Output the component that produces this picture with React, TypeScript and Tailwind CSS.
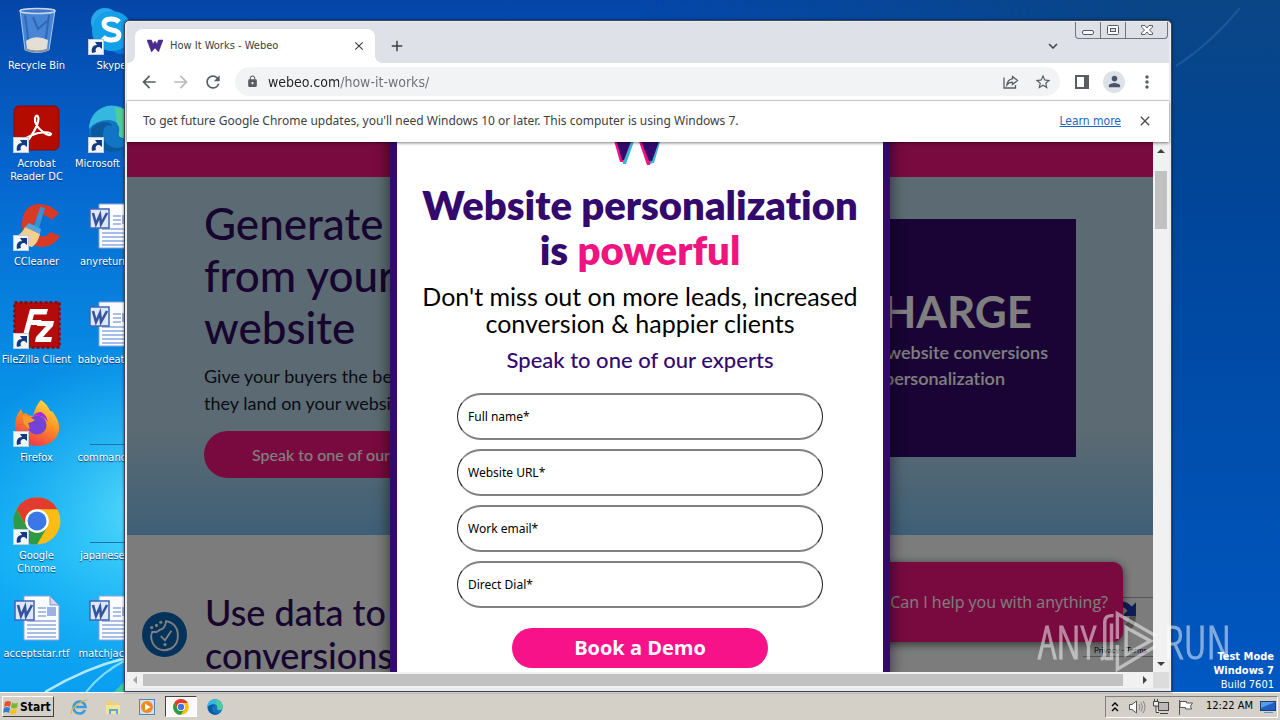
import { ReactNode } from "react";
import {
  MdArrowBack,
  MdArrowForward,
  MdRefresh,
  MdLock,
  MdClose,
  MdAdd,
  MdKeyboardArrowDown,
  MdMoreVert,
  MdPerson,
  MdStarBorder,
} from "react-icons/md";

const ui = "font-['DejaVu_Sans_Condensed','DejaVu_Sans',sans-serif]";

function ShortcutArrow() {
  return (
    <svg viewBox="0 0 16 16" className="absolute bottom-0 left-0 size-4" aria-hidden="true">
      <rect x="0.5" y="0.5" width="15" height="15" fill="#f4f6f8" stroke="#c3ccd6" />
      <path d="M4 14C3 9 5 6 9 6L7 3h7v7l-2.500-2C8 8 7 10 8 13z" fill="#123a80" />
    </svg>
  );
}

function RecycleBin() {
  return (
    <svg viewBox="0 0 48 48" className="size-12">
      <path d="M7 3L12 43q12 5 24 0L42 3z" fill="#5c9ae0" fillOpacity="0.75" stroke="#a9c8ea" />
      <path d="M12 8l4 30M36 8l-4 30M20 10l5 12 9-8" stroke="#2e66b8" strokeWidth="2" fill="none" />
      <path d="M13 34q10-7 22-1l-1 9q-10 4-20 0z" fill="#e3ded6" />
      <path d="M12 41q12 5 24 0v2q-12 5-24 0z" fill="#8b8f96" />
      <ellipse cx="24.500" cy="4" rx="17.500" ry="2.500" fill="#3d79c8" stroke="#c5d6e8" strokeWidth="1.500" />
    </svg>
  );
}

function Skype() {
  return (
    <svg viewBox="0 0 48 48" className="size-12">
      <circle cx="17" cy="15" r="14" fill="#28a8ea" />
      <circle cx="33" cy="34" r="13" fill="#0078d4" />
      <circle cx="24" cy="24" r="20" fill="#14a0e8" />
      <path d="M31 15q-3-3-8-3-7 0-7 5 0 4 8 6 7 1 7 5 0 5-8 5-5 0-8-3" stroke="#fff" strokeWidth="5" fill="none" />
    </svg>
  );
}

function Acrobat() {
  return (
    <svg viewBox="0 0 48 48" className="size-12">
      <rect x="1" y="1" width="45" height="44" rx="5" fill="#b30b00" stroke="#8a0800" />
      <path
        d="M12 36Q10 33 25 28Q37 26 38 29Q37 32 30 27Q21 20 22 13Q24 8 25.500 13Q26 20 16 34Q13 37 12 36z"
        stroke="#fff"
        strokeWidth="2.200"
        fill="none"
      />
    </svg>
  );
}

function Edge({ className }: { className: string }) {
  return (
    <svg viewBox="0 0 48 48" className={className}>
      <circle cx="24" cy="24" r="23" fill="#1275c4" />
      <path d="M1 24A23 23 0 0 1 47 23q0 9-9 10-9 0-7-5 2-12-10-13Q8 15 1 24z" fill="#35b8e0" />
      <path d="M27 2q20 4 20 21 0 9-9 10-9 0-7-5 2-5-2-9z" fill="#52d08a" fillOpacity="0.85" />
      <path d="M17 22q-6 12 5 19 9 5 20-3-8 10-20 9Q2 43 3 25q4-8 14-8 6 0 7 4-5-2-7 1z" fill="#0c5a9e" />
    </svg>
  );
}

function CCleaner() {
  return (
    <svg viewBox="0 0 48 48" className="size-12">
      <path d="M46 11Q38 0 24 1 8 4 9 24q3 17 18 20 13 1 20-11l-10-4q-4 6-9 4-8-3-7-12 2-9 9-9 6 1 8 5z" fill="#d83a26" />
      <path d="M27 4l5 1-6 20-5-2z" fill="#3c8fd0" />
      <path d="M16 20l12 6-1 5-15-7z" fill="#4fa5de" />
      <path d="M12 24l15 7q-2 9-8 13Q8 42 2 34q7-3 10-10z" fill="#f2cf8e" />
    </svg>
  );
}

function FileZilla() {
  return (
    <svg viewBox="0 0 48 48" className="size-12">
      <rect x="1.500" y="1.500" width="45" height="45" fill="#b50a0a" stroke="#8e0505" strokeWidth="2.500" strokeDasharray="3 2" />
      <path d="M9 38L17 8h18l-1.500 5.500H21L19.500 19h9l-1.500 5h-9l-4 14z" fill="#fff" />
      <path d="M25 20h16l-1 5-10 11h9l-1 5H22l1-5 10-11h-9z" fill="#fff" />
    </svg>
  );
}

function Firefox() {
  return (
    <svg viewBox="0 0 48 48" className="size-12">
      <defs>
        <linearGradient id="fox" x1="0.800" y1="0" x2="0.300" y2="1">
          <stop offset="0" stopColor="#ffe24a" />
          <stop offset="0.450" stopColor="#ff9422" />
          <stop offset="1" stopColor="#f0304f" />
        </linearGradient>
      </defs>
      <path d="M28 1q7 5 9 11 3 0 4 3 6 8 5 16-3 15-21 16Q4 46 2 27q0-10 6-17l2 5 3-1q2 3 7 3 3-11 8-16z" fill="url(#fox)" />
      <circle cx="24" cy="26" r="9.500" fill="#7542d8" />
      <path d="M10 17q8 1 12 4-3 3-7 3l2 6Q9 27 10 17z" fill="#ff9a28" />
      <path d="M20 17q9-2 15 6-2-8-7-10-5 0-8 4z" fill="#a02be0" />
    </svg>
  );
}

function Chrome({ className }: { className: string }) {
  return (
    <svg viewBox="0 0 48 48" className={className}>
      <circle cx="24" cy="24" r="23.500" fill="#fbbc16" />
      <path d="M3.600 12.200A23.500 23.500 0 0 1 44.400 12.200H24A11.800 11.800 0 0 0 13.800 29.900z" fill="#e33b2e" />
      <path d="M3.600 12.200A23.500 23.500 0 0 0 24 47.500L34.200 29.900A11.800 11.800 0 0 1 13.800 29.900z" fill="#2c9a47" />
      <circle cx="24" cy="24" r="11.800" fill="#fff" />
      <circle cx="24" cy="24" r="9.500" fill="#3b78e7" />
    </svg>
  );
}

function WordDoc() {
  return (
    <svg viewBox="0 0 48 48" className="size-12">
      <path d="M11 1h26l9 9v35H11z" fill="#fbfcff" stroke="#8ea3d4" />
      <path d="M37 1v9h9z" fill="#c9d7f2" stroke="#7e93c8" />
      <path d="M25 13h8M25 17h8M25 21h8M14 26h29M14 30h29M14 34h29M14 38h29M14 42h29" stroke="#90a8dc" strokeWidth="1.300" />
      <rect x="34" y="12" width="9" height="9" fill="#9cb2e2" />
      <rect x="2" y="6" width="19" height="19" fill="#dfe8fa" stroke="#4164b4" strokeWidth="1.500" />
      <path d="M5 10l3 11 4-9 1 9 6-11" stroke="#34549e" strokeWidth="2.600" fill="none" />
    </svg>
  );
}

function BlankFile() {
  return (
    <svg viewBox="0 0 48 48" className="size-12">
      <path d="M2 45.500h45" stroke="#1775a8" strokeWidth="1" />
    </svg>
  );
}

type DesktopItem = { label: string; icon: ReactNode; link?: boolean };

const desktopItems: DesktopItem[] = [
  { label: "Recycle Bin", icon: <RecycleBin /> },
  { label: "Skype", icon: <Skype />, link: true },
  { label: "Acrobat Reader DC", icon: <Acrobat />, link: true },
  { label: "Microsoft Edge", icon: <Edge className="size-12" />, link: true },
  { label: "CCleaner", icon: <CCleaner />, link: true },
  { label: "anyreturn.rtf", icon: <WordDoc /> },
  { label: "FileZilla Client", icon: <FileZilla />, link: true },
  { label: "babydeath.rtf", icon: <WordDoc /> },
  { label: "Firefox", icon: <Firefox />, link: true },
  { label: "command.jpg", icon: <BlankFile /> },
  { label: "Google Chrome", icon: <Chrome className="size-12" />, link: true },
  { label: "japanese.jpg", icon: <BlankFile /> },
  { label: "acceptstar.rtf", icon: <WordDoc /> },
  { label: "matchjack.rtf", icon: <WordDoc /> },
];

const wrapped = ["Acrobat Reader DC", "Google Chrome"];

function DesktopIcons() {
  return (
    <ul className="grid w-[150px] auto-rows-[98px] grid-cols-2 pt-[7px]">
      {desktopItems.map((item) => (
        <li key={item.label} className="flex flex-col items-center pr-[2px]">
          <div className="relative shrink-0">
            {item.icon}
            {item.link && <ShortcutArrow />}
          </div>
          <span
            className={
              (wrapped.includes(item.label) ? "w-16 " : "whitespace-nowrap ") +
              "mt-1 text-center text-[11px] leading-[13px] text-white [text-shadow:0_1px_1px_#00356e]"
            }
          >
            {item.label}
          </span>
        </li>
      ))}
    </ul>
  );
}

function Wallpaper() {
  return (
    <svg className="absolute inset-0 size-full" viewBox="0 0 1280 692" preserveAspectRatio="none" aria-hidden="true">
      <defs>
        <linearGradient id="sky" x1="0" y1="0" x2="0" y2="1">
          <stop offset="0" stopColor="#0446a8" />
          <stop offset="0.250" stopColor="#0566cf" />
          <stop offset="0.550" stopColor="#078fe6" />
          <stop offset="0.800" stopColor="#12aef4" />
          <stop offset="1" stopColor="#0b9ff0" />
        </linearGradient>
        <linearGradient id="deep" x1="0" y1="0" x2="0" y2="1">
          <stop offset="0" stopColor="#0a4585" />
          <stop offset="0.300" stopColor="#00459a" />
          <stop offset="1" stopColor="#0058c2" />
        </linearGradient>
        <linearGradient id="fade" x1="0" y1="0" x2="1" y2="0">
          <stop offset="0.500" stopColor="#000" />
          <stop offset="0.900" stopColor="#fff" />
        </linearGradient>
        <mask id="east">
          <rect width="1280" height="692" fill="url(#fade)" />
        </mask>
        <radialGradient id="glow" cx="140" cy="510" r="170" gradientUnits="userSpaceOnUse">
          <stop offset="0" stopColor="#6ff0ff" stopOpacity="0.700" />
          <stop offset="1" stopColor="#30c8ff" stopOpacity="0" />
        </radialGradient>
      </defs>
      <rect width="1280" height="692" fill="url(#sky)" />
      <rect width="400" height="692" fill="url(#glow)" />
      <rect width="1280" height="692" fill="url(#deep)" mask="url(#east)" />
      <path d="M1176 66Q1210 44 1240 8" stroke="#5b8fc8" strokeOpacity="0.250" strokeWidth="2" fill="none" />
      <path d="M45 692Q85 668 126 658" stroke="#d8fbff" strokeOpacity="0.800" strokeWidth="2.500" fill="none" />
      <path d="M86 692Q102 672 126 660" stroke="#b4f3ff" strokeOpacity="0.700" strokeWidth="2" fill="none" />
      <path d="M114 692l12-12v12z" fill="#3fc9a0" />
    </svg>
  );
}

function WindowButtons() {
  return (
    <div className="mr-px flex h-[17px] rounded-b-[4px] border border-t-0 border-[#71757d] bg-[#dde0e7]">
      <button aria-label="Minimize" className="flex w-[25px] items-center justify-center border-r border-[#71757d]">
        <svg viewBox="0 0 24 16" className="h-4 w-6">
          <rect x="6.500" y="8.500" width="11" height="4" rx="1.500" fill="#fff" stroke="#555a62" />
        </svg>
      </button>
      <button aria-label="Restore" className="flex w-[25px] items-center justify-center border-r border-[#71757d]">
        <svg viewBox="0 0 24 16" className="h-4 w-6">
          <rect x="6.500" y="3.500" width="11" height="9" rx="1" fill="#fff" stroke="#555a62" />
          <rect x="9.500" y="6.500" width="5" height="3" fill="#dde0e7" stroke="#555a62" />
        </svg>
      </button>
      <button aria-label="Close" className="flex w-[41px] items-center justify-center">
        <svg viewBox="0 0 24 16" className="h-4 w-6">
          <path
            d="M6.500 3.500h3.500l2 2.500 2-2.500h3.500v1.500l-3 3 3 3v1.500H14l-2-2.500-2 2.500H6.500V11l3-3-3-3z"
            fill="#fff"
            stroke="#555a62"
          />
        </svg>
      </button>
    </div>
  );
}

function TabStrip() {
  return (
    <div className="flex h-[41px] items-start justify-between bg-[#dee1e8]">
      <div className="flex items-end pt-[7px] pl-2">
        <div className="relative flex h-[34px] w-60 items-center rounded-t-lg bg-white pr-[9px] pl-3">
          <span className="absolute bottom-0 -left-2 size-2 bg-[radial-gradient(circle_at_0_0,#dee1e8_8px,#fff_8px)]" />
          <span className="absolute -right-2 bottom-0 size-2 bg-[radial-gradient(circle_at_100%_0,#dee1e8_8px,#fff_8px)]" />
          <svg viewBox="0 0 16 14" className="h-[14px] w-4" aria-hidden="true">
            <path d="M0 1h4.500l1.500 4L8 2l2 3 1.500-4H16l-4.500 12L8 9l-3.500 4z" fill="#4a2b8c" stroke="#4a2b8c" strokeWidth="0.500" />
          </svg>
          <span className="ml-[7px] flex-1 text-[11px] text-[#3c4043]">How It Works - Webeo</span>
          <button aria-label="Close tab">
            <MdClose className="size-[14px] text-[#3c4043]" />
          </button>
        </div>
        <button aria-label="New tab" className="ml-[13px] flex h-[34px] items-center">
          <MdAdd className="size-[18px] text-[#3c4043]" />
        </button>
      </div>
      <div className="flex items-start">
        <button aria-label="Search tabs" className="mt-[15px] mr-[13px]">
          <MdKeyboardArrowDown className="size-[18px] text-[#3c4043]" />
        </button>
        <WindowButtons />
      </div>
    </div>
  );
}

function Toolbar() {
  return (
    <div className="flex h-[38px] items-center border-b border-[#d5d7db] bg-white pr-3 pl-3 text-[#5a5e63]">
      <button aria-label="Back">
        <MdArrowBack className="size-5" />
      </button>
      <button aria-label="Forward" className="ml-3 text-[#b9bbbe]">
        <MdArrowForward className="size-5" />
      </button>
      <button aria-label="Reload" className="ml-3">
        <MdRefresh className="size-5" />
      </button>
      <div className="ml-3 flex h-[29px] flex-1 items-center rounded-full bg-[#f1f3f4] pr-2 pl-[11px]">
        <MdLock className="size-[13px]" />
        <input
          aria-label="Address"
          defaultValue="webeo.com/how-it-works/"
          className="ml-[9px] h-[23px] min-w-0 flex-1 bg-[linear-gradient(90deg,#202124_71px,#6b6f74_71px)] bg-clip-text text-[14px] text-transparent outline-none"
        />
        <button aria-label="Share">
          <svg viewBox="0 0 16 16" className="size-4" fill="none" stroke="currentColor" strokeWidth="1.300">
            <path d="M1 3.500V14h11.500v-3" />
            <path d="M9.500 2.500l5 4-5 4V8.300Q6 8 3.800 11 4.500 5.500 9.500 4.800z" />
          </svg>
        </button>
        <button aria-label="Bookmark" className="ml-[15px]">
          <MdStarBorder className="size-[18px]" />
        </button>
      </div>
      <button aria-label="Side panel" className="ml-[14px]">
        <svg viewBox="0 0 16 16" className="size-4">
          <path d="M1 1h14v14H1zM3 3v10h7V3z" fill="currentColor" fillRule="evenodd" />
        </svg>
      </button>
      <button aria-label="Profile" className="ml-[13px] flex size-[22px] items-center justify-center rounded-full bg-[#dde1e8]">
        <MdPerson className="size-[17px] text-[#4a5468]" />
      </button>
      <button aria-label="Menu" className="ml-3">
        <MdMoreVert className="size-5" />
      </button>
    </div>
  );
}

function InfoBar() {
  return (
    <div className="relative z-10 flex h-[41px] items-center bg-white pr-4 pb-px pl-4 text-[#3c4043] shadow-[0_1px_3px_rgba(0,0,0,0.5)]">
      <p className="flex-1 font-['Noto_Sans',sans-serif] text-[12px]">
        To get future Google Chrome updates, you'll need Windows 10 or later. This computer is using Windows 7.
      </p>
      <a href="#learn" className="text-[12px] text-[#1a66c8] underline">
        Learn more
      </a>
      <button aria-label="Dismiss" className="ml-4">
        <MdClose className="size-4 text-[#4b4f54]" />
      </button>
    </div>
  );
}

function Hero() {
  return (
    <section className="flex h-[358px] justify-between bg-[linear-gradient(#b9d6e6_70%,#7ebfee)] px-[77px]">
      <div className="w-[400px] pt-5">
        <h1 className="text-[44px] leading-[52px] font-medium text-[#2e0a60]">
          Generate
          <br />
          from your
          <br />
          website
        </h1>
        <p className="mt-[10px] text-[18px] leading-[27px] whitespace-nowrap text-[#14182a]">
          Give your buyers the best
          <br />
          they land on your website
        </p>
        <button className="mt-[14px] h-[47px] rounded-full bg-[#f01480] px-12 text-[16px] font-medium whitespace-nowrap text-white">
          Speak to one of our experts
        </button>
      </div>
      <div className="mt-[42px] flex h-[238px] w-[400px] flex-col items-end bg-[#33086a] pt-16 text-right font-semibold text-white">
        <p className="pr-[44px] text-[44px] leading-[56px] font-bold">SUPERCHARGE</p>
        <p className="pr-7 text-[18px] leading-[26px]">your website conversions</p>
        <p className="pr-[71px] text-[18px] leading-[26px] [font-variant-ligatures:none]">with personalization</p>
      </div>
    </section>
  );
}

function CookieButton() {
  return (
    <button
      aria-label="Cookie settings"
      className="absolute bottom-[15px] left-[15px] flex size-[45px] items-center justify-center rounded-full bg-[#0664b4] text-white"
    >
      <svg viewBox="0 0 32 32" className="size-[34px]" fill="none" stroke="currentColor" strokeWidth="1.800">
        <path d="M17 3A12.500 12.500 0 0 1 28 17A12.500 12.500 0 1 1 4 13q5 1 7-2 5 0 6-8z" />
        <path d="M12 17l4 4 6-9" />
        <g fill="currentColor" stroke="none">
          <circle cx="12" cy="4" r="1.500" />
          <circle cx="3.500" cy="9" r="1.500" />
          <circle cx="8" cy="7" r="1.500" />
          <circle cx="16" cy="25" r="1.500" />
        </g>
      </svg>
    </button>
  );
}

function ChatPrompt() {
  return (
    <>
      <div className="absolute right-0 bottom-[15px] flex h-[60px] w-[70px] flex-col items-end justify-between border-t border-b border-[#aaa] bg-[#f9f9f9]">
        <svg viewBox="0 0 34 34" className="mr-4 size-9" aria-hidden="true">
          <path d="M17 3q8 0 12 5l4-4v13H20l5-5q-3-4-8-4z" fill="#1c3aa9" />
          <path d="M33 17q0 9-5 13l-5-5q4-3 4-8z" fill="#a0a0a0" />
        </svg>
        <span className="pr-[6px] text-[8px] leading-[12px] whitespace-nowrap text-black">Privacy - Terms</span>
      </div>
      <div className="absolute right-[30px] bottom-[30px] flex h-20 w-[290px] items-center justify-end rounded-[10px] bg-[#f01480] pr-[15px] font-['Open_Sans',sans-serif] text-[16px] text-white shadow-[0_2px_10px_rgba(0,0,0,0.6)]">
        Can I help you with anything?
      </div>
    </>
  );
}

const fields = ["Full name*", "Website URL*", "Work email*", "Direct Dial*"];

function DemoModal() {
  return (
    <div
      role="dialog"
      aria-label="Book a demo"
      className="-mt-[60px] h-[606px] w-[500px] shrink-0 rounded-[18px] border-[7px] border-[#33096e] bg-white shadow-[0_0_16px_rgba(0,0,0,0.6)]"
    >
      <div className="flex flex-col items-center pt-4 text-center [font-variant-ligatures:none]">
        <svg viewBox="0 0 60 60" className="mr-[6px] size-[60px]" aria-hidden="true">
          <path d="M4 0h12l6 20 8-14 10 18 6-24h18L47 58 42 59 31 25 19 59h-3z" fill="#38b6d4" />
          <path d="M-3 0h12l6 20 8-14 10 18 6-24h14L43 60h-3L28 25 16 57l-3 0z" fill="#f01480" />
          <path d="M-1 0h14l8 20 8-14 10 18 8-24h18L45 56h-3L29 23 17 55h-2z" fill="#33096e" />
        </svg>
        <h2 className="mt-[18px] text-[40px] leading-[45px] font-extrabold whitespace-nowrap text-[#33096e]">
          Website personalization
          <br />
          is <span className="text-[#f01480]">powerful</span>
        </h2>
        <p className="mt-[10px] text-[25px] leading-[27px] whitespace-nowrap text-black">
          Don't miss out on more leads, increased
          <br />
          conversion &amp; happier clients
        </p>
        <p className="mt-[9px] text-[22px] leading-[28px] font-medium text-[#33096e]">Speak to one of our experts</p>
      </div>
      <form className="mt-[19px] flex flex-col items-center gap-[9px] font-['Noto_Sans',sans-serif]">
        {fields.map((name) => (
          <input
            key={name}
            aria-label={name}
            placeholder={name}
            className="h-[47px] w-[366px] rounded-full border-x border-y-2 border-x-[#222] border-y-[#808080] bg-white px-[10px] text-[12px] text-black placeholder:text-black"
          />
        ))}
        <button
          type="button"
          className="mt-[11px] h-10 w-64 rounded-full bg-[#f8128a] font-['Open_Sans',sans-serif] text-[20px] font-bold text-white"
        >
          Book a Demo
        </button>
      </form>
    </div>
  );
}

function PageContent() {
  return (
    <main className="relative min-w-0 flex-1 overflow-hidden bg-[#f8f9fa] font-['Lato',sans-serif]">
      <div className="h-[35px] bg-[#f01480]" />
      <Hero />
      <section className="pt-14 pl-[78px]">
        <h2 className="text-[36px] leading-[43px] font-medium text-[#2e0a60]">
          Use data to
          <br />
          conversions
        </h2>
      </section>
      <CookieButton />
      <ChatPrompt />
      <div className="absolute inset-0 flex items-start justify-center bg-black/50">
        <DemoModal />
      </div>
    </main>
  );
}

function Arrow({ d, color }: { d: string; color: string }) {
  return (
    <svg viewBox="0 0 16 16" className="size-4 shrink-0" aria-hidden="true">
      <path d={d} fill={color} />
    </svg>
  );
}

function BrowserWindow() {
  return (
    <section className="absolute top-5 right-[108px] bottom-0 left-[124px] flex flex-col overflow-hidden rounded-t-[5px] border border-[#3c4654] bg-[#e9ebef] px-[2px] pt-px pb-[3px] shadow-[0_0_3px_rgba(0,0,0,0.6)]">
      <TabStrip />
      <Toolbar />
      <InfoBar />
      <div className="flex min-h-0 flex-1">
        <PageContent />
        <div className="flex w-4 flex-col items-center bg-[#f1f1f1]">
          <Arrow d="M4 11l4-4 4 4z" color="#404040" />
          <div className="mt-[13px] h-[58px] w-3 bg-[#c1c1c1]" />
          <div className="flex-1" />
          <Arrow d="M4 6l4 4 4-4z" color="#404040" />
        </div>
      </div>
      <div className="flex h-4 items-center bg-[#f1f1f1]">
        <Arrow d="M10 4l-4 4 4 4z" color="#a3a3a3" />
        <div className="mr-[14px] h-3 flex-1 bg-[#c1c1c1]" />
        <Arrow d="M6 4l4 4-4 4z" color="#404040" />
        <div className="h-4 w-4 bg-[#dcdcdc]" />
      </div>
    </section>
  );
}

const markText =
  "font-['Open_Sans_Condensed_Light','Open_Sans_Condensed','Noto_Sans_ExtraCondensed','Roboto_Condensed','Liberation_Sans_Narrow',sans-serif] text-[46px] leading-[64px] font-light [-webkit-text-stroke:1px_currentColor]";

function Watermark() {
  return (
    <div className="pointer-events-none absolute right-[49px] bottom-[19px] flex items-center text-white opacity-50">
      <span className={markText}>ANY</span>
      <svg viewBox="0 0 70 64" className="h-16 w-[68px]" fill="none" stroke="currentColor" strokeWidth="3.500">
        <path d="M18 6q-9-1-9 7v32q0 4-4 6M9 50h7V14" />
        <path d="M22 30V4L62 27M22 36v25L62 37" />
        <path d="M31 18v28L56 32z" />
      </svg>
      <span className={markText}>RUN</span>
    </div>
  );
}

function Taskbar() {
  return (
    <footer className="flex h-7 shrink-0 items-center justify-between border-t border-white bg-[#d4d0c8] pr-[2px] pl-[2px] text-black">
      <div className="flex items-center">
        <button className="flex h-[21px] w-[52px] items-center gap-px border border-t-white border-r-[#404040] border-b-[#404040] border-l-white text-[12px] font-bold">
          <svg viewBox="0 0 16 16" className="size-4 shrink-0" aria-hidden="true">
            <path d="M2 3q3-2 6 0L7 8Q4 6 1 8z" fill="#e8502a" />
            <path d="M9 3.500q3 2 6 0L14 8.500q-3 2-6 0z" fill="#7ab82e" />
            <path d="M1 9q3-2 6 0l-1 5q-3-2-6 0z" fill="#3a78d0" />
            <path d="M8 9.500q3 2 6 0l-1 5q-3 2-6 0z" fill="#f5c21c" />
          </svg>
          Start
        </button>
        <button aria-label="Internet Explorer" className="ml-4">
          <svg viewBox="0 0 18 18" className="size-[18px]">
            <path d="M15 12a6 6 0 1 1 .5-3H5.500" stroke="#3a9be0" strokeWidth="2.500" fill="none" />
            <path d="M2 16q-3-3 5-9 9-7 10-4" stroke="#e2b93a" strokeWidth="1.300" fill="none" />
          </svg>
        </button>
        <button aria-label="Explorer" className="ml-4">
          <svg viewBox="0 0 18 18" className="size-[18px]">
            <path d="M2 3h6l1 2h7v11H2z" fill="#efcf6e" />
            <path d="M2 7h14v9H2z" fill="#f7e3a0" />
            <path d="M5 11h9v5h-2v-3H7v3H5z" fill="#5da7dc" />
          </svg>
        </button>
        <button aria-label="Media Player" className="ml-4">
          <svg viewBox="0 0 18 18" className="size-[18px]">
            <rect x="1.500" y="1.500" width="15" height="15" fill="#cfe1f2" stroke="#4d86bd" />
            <circle cx="9" cy="9" r="6" fill="#f08a1c" />
            <path d="M7 5.500v7l5.500-3.500z" fill="#fff" />
          </svg>
        </button>
        <button
          aria-label="Google Chrome window"
          className="ml-[9px] flex h-[21px] w-8 items-center justify-center border border-t-[#404040] border-r-white border-b-white border-l-[#404040] bg-[#fbfaf8]"
        >
          <Chrome className="size-4" />
        </button>
        <button aria-label="Microsoft Edge" className="ml-[10px]">
          <Edge className="size-4" />
        </button>
      </div>
      <div className="flex h-[22px] items-center border border-t-[#808080] border-r-white border-b-white border-l-[#808080] pr-px pl-1 text-[11px]">
        <svg viewBox="0 0 10 12" className="h-3 w-[10px]" fill="none" stroke="#000" strokeWidth="1.400" aria-hidden="true">
          <path d="M2 5l3-3 3 3M2 10l3-3 3 3" />
        </svg>
        <svg viewBox="0 0 18 18" className="ml-2 size-[18px]" fill="#fff" stroke="#555" aria-hidden="true">
          <path d="M1.500 6.500H4L8.500 3v12L4 11.500H1.500z" />
          <path d="M11 6q2 3 0 6M13 4.500q3 4.500 0 9M15 3q4 6 0 12" fill="none" stroke="#888" />
        </svg>
        <svg viewBox="0 0 18 18" className="ml-[6px] size-[18px]" fill="#eee" stroke="#444" aria-hidden="true">
          <rect x="6.500" y="4.500" width="10" height="8" fill="#b9b9b9" />
          <path d="M8 15.500h8M1.500 3.500h5V8h-5zM2.500 1v2M5.500 1v2M4 8v6.500h3" />
        </svg>
        <svg viewBox="0 0 18 18" className="ml-[6px] size-[18px]" fill="#fff" stroke="#555" aria-hidden="true">
          <path d="M3.500 2v15M4 3.500h6.500V5h6l-2 3 1 3h-6V9.500H4z" />
        </svg>
        <time className="ml-3 whitespace-nowrap">12:22 AM</time>
        <svg viewBox="0 0 16 16" className="ml-[7px] size-4" aria-hidden="true">
          <rect x="0.500" y="2.500" width="15" height="9" fill="#1d5fc4" stroke="#16407e" />
          <path d="M1 3h14L1 9z" fill="#5a9be8" />
          <path d="M4 13.500h9" stroke="#6b8fc0" />
        </svg>
      </div>
    </footer>
  );
}

export default function App() {
  return (
    <div className={ui + " flex h-screen flex-col overflow-hidden bg-[#0566cf]"}>
      <div className="relative min-h-0 flex-1">
        <Wallpaper />
        <div className="relative">
          <DesktopIcons />
        </div>
        <p className="absolute right-[6px] bottom-0 text-right text-[11px] leading-[14px] font-bold text-white">
          Test Mode
          <br />
          Windows 7
          <br />
          <span className="leading-[14px] font-normal">Build 7601</span>
        </p>
        <BrowserWindow />
        <Watermark />
      </div>
      <Taskbar />
    </div>
  );
}
